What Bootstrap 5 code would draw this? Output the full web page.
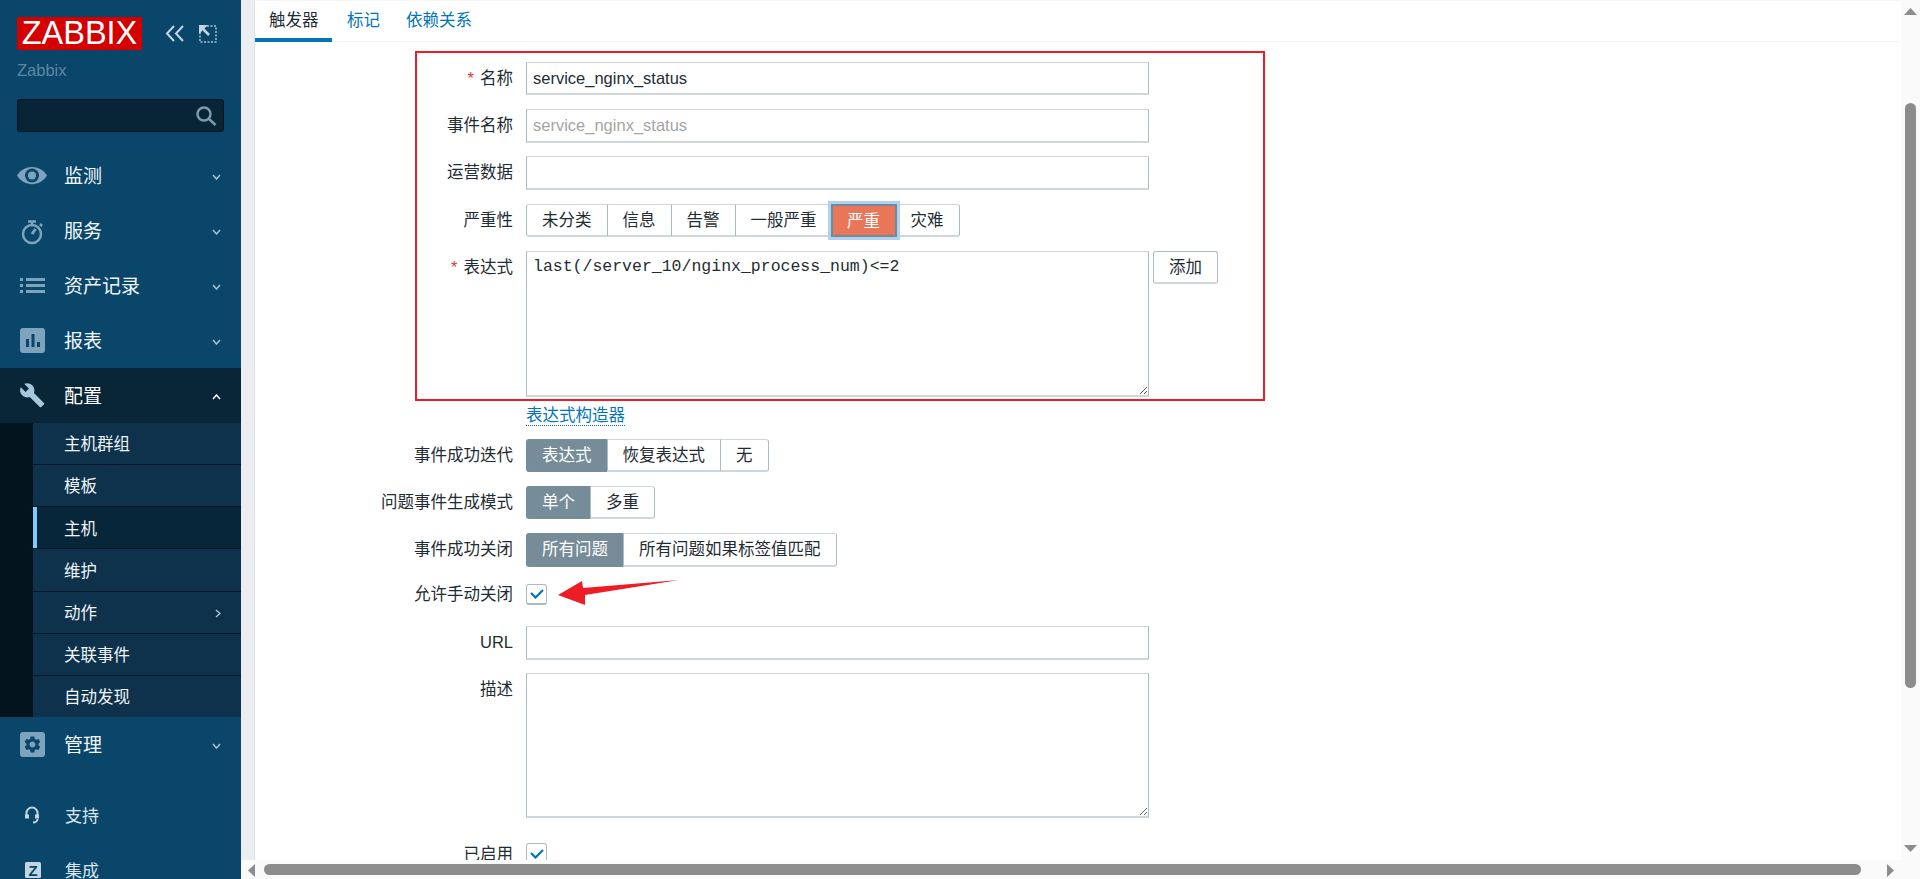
<!DOCTYPE html>
<html lang="zh">
<head>
<meta charset="utf-8">
<title>Zabbix</title>
<link href="https://cdn.jsdelivr.net/npm/bootstrap@5.3.0/dist/css/bootstrap.min.css" rel="stylesheet">
<style>
html,body{height:100%;overflow:hidden}
body{font-family:"Liberation Sans","Noto Sans CJK SC",sans-serif;font-size:16.5px;color:#1f2c33;background:#fff}
.app-shell{height:879px}
.side{width:241px;background:#0a466a;color:#fff;overflow:hidden;flex:none}
.logo-row{padding:17px 0 0 17px;height:50px}
.logo-box{width:125px;height:33px;background:#d40000;color:#fff;font-size:32.5px;line-height:33px;text-align:center;letter-spacing:0}
.logo-tools{margin-left:23px;gap:15px;padding-top:8px}
.side-name{color:#5f87a0;padding:10px 0 0 17px;height:49px;line-height:20px;font-size:16.5px}
.side-search{margin:0 17px;height:33px;width:207px;background:#082437;border:1px solid #04141f;border-radius:3px;padding-right:6px;justify-content:flex-end}
.menu-top{margin-top:16px}
.m-item{height:55px;padding:3px 20px 0 64px;font-size:19px;color:#f2f7fa;position:relative}
.m-item.on{background:#082638;color:#fff}
.m-ico{position:absolute;left:17px;top:0;width:30px;height:55px}
.m-chev{margin-left:auto}
.sub-wrap{background:#03141e;padding-left:33px}
.s-item{height:42.17px;background:#0e324c;border-bottom:1px solid #03172a;padding:2px 20px 0 31px;font-size:16.5px;color:#eef4f7;position:relative}
.s-item:last-child{border-bottom:0;height:41px}
.s-item.on{background:#08263a;box-shadow:inset 4px 0 0 #7fc9ff}
.foot-item{height:55px;padding:2px 0 0 65px;font-size:17px;color:#d9e6ee;position:relative}
.foot-list{margin-top:16px}
.main-col{min-width:0}
.view{min-height:0}
.gutter-strip{width:14px;background:#ebeef0;border-right:1px solid #dfe4e7;flex:none}
.canvas{position:relative;overflow:hidden;min-width:0;background:#fff}
.tabs-bar{height:42px;border-bottom:1px solid #f3f3f3;border-top:1px solid #f5f5f5}
.tab-lnk{height:41px;padding:0 13px;color:#0275b8;font-size:16.5px;border-bottom:4px solid transparent;line-height:38px;text-decoration:none;white-space:nowrap}
.tab-lnk.on{color:#1f2c33;border-bottom-color:#0275b8;padding:0 14px;width:77px;margin-right:2px}
.form-area{padding-top:20px}
.f-row{display:flex;margin-bottom:13.8px}
.f-lab{width:258px;margin-right:13px;text-align:right;height:33.4px;line-height:33px;flex:none}
.req{color:#e33734;margin-right:6px}
.fld{width:623px;height:33.4px;border:1px solid #acbbc2;border-top-color:#cfd7dc;border-bottom:2px solid #cfd7dc;border-radius:0;padding:0 6px;font-size:16.5px;color:#1f2c33;box-shadow:none}
.fld::placeholder{color:#a5a5a5;opacity:1}
.fld-area{height:146px;resize:both;font-family:"Liberation Mono",monospace;font-size:16.5px;line-height:20px;padding:5px 6px}
.fld-desc{height:145px;resize:both;font-size:16.5px}
.seg-btn{font-size:16.5px;line-height:31px;height:33.4px;padding:0 15px;border:1px solid #acbbc2;border-bottom:2px solid #cfd7dc;border-top-color:#cfd7dc;border-radius:3px;background:#fff;color:#1f2c33;flex:none!important}
.seg-btn.act,.seg-btn.act:hover{background:#768d99;color:#fff;border-color:#768d99}
.seg-btn.sev{background:#e97659;color:#fff;border:2px solid #6f8b9a;outline:3px solid #aed3f2;outline-offset:0;z-index:2;width:66px;padding:0;margin-left:-2px!important;margin-right:-1px}
.add-btn{margin-left:4px;width:65px;height:33.4px;padding:0;font-size:16.5px;line-height:30px;border:1px solid #acbbc2;border-bottom:2px solid #cfd7dc;border-radius:3px;color:#1f2c33;background:#fff}
.expr-link{color:#0275b8;text-decoration:none;border-bottom:1px dotted #0275b8;line-height:20px;height:21px;display:inline-block}
.link-row{margin:-7.5px 0 0 271px;height:35.7px}
.chk-box{width:21px;height:21px;border:1px solid #acbbc2;border-bottom-width:2px;border-radius:3px;margin-top:6px;background:#fff;flex:none}
.row-chk{margin-top:-2.4px;margin-bottom:15px}
.enabled-row{margin-top:18.7px}
.enabled-row .f-lab{line-height:35px}
.red-note{position:absolute;left:160px;top:51px;width:850px;height:350px;border:2px solid #ee1c25;pointer-events:none}
.arrow-note{position:absolute;left:303px;top:576px}
.v-track{width:19px;background:#fafafa;flex:none;padding-top:8px}
.v-thumb{width:11px;height:585px;background:#8c8c8c;border-radius:6px;margin:88px 0 157px 4px}
.h-track{height:19px;background:#fafafa;padding:4px 26px 0 7px}
.h-thumb{width:1597px;height:11px;background:#8c8c8c;border-radius:6px;margin:0 26px 0 9px}
</style>
</head>
<body>
<div class="d-flex app-shell">
  <aside class="side">
    <div class="logo-row d-flex">
      <div class="logo-box">ZABBIX</div>
      <div class="logo-tools d-flex align-items-start">
        <svg width="19" height="17" viewBox="0 0 19 17" fill="none" stroke="#c4d6e2" stroke-width="2"><path d="M9 1 2 8.500 9 16M18 1 11 8.500 18 16"/></svg>
        <svg width="18" height="18" viewBox="0 0 18 18" fill="none"><rect x="1" y="1" width="16" height="16" stroke="#a9c2d2" stroke-width="1.500" stroke-dasharray="2 1.500"/><path d="M0 0h9L0 9Z" fill="#c4d6e2"/><path d="m3 3 7 7" stroke="#c4d6e2" stroke-width="2.500"/></svg>
      </div>
    </div>
    <div class="side-name">Zabbix</div>
    <div class="side-search d-flex align-items-center">
      <svg width="22" height="22" viewBox="0 0 22 22" fill="none" stroke="#7d99aa" stroke-width="2.500"><circle cx="9" cy="9" r="6.500"/><path d="m14 14 6.500 6"/></svg>
    </div>
    <nav class="menu-top">
      <div class="m-item d-flex align-items-center">
        <svg class="m-ico" viewBox="0 0 30 55"><path d="M0 27.500C7 16 23 16 30 27.500 23 39 7 39 0 27.500Z" fill="#7ea3bd"/><circle cx="15" cy="27.500" r="7" fill="#0a466a"/><circle cx="15" cy="27.500" r="4" fill="#7ea3bd"/></svg>
        监测<svg class="m-chev" width="9" height="6" viewBox="0 0 9 6" fill="none" stroke="#a9c2d2" stroke-width="1.500"><path d="m1 1 3.500 4L8 1"/></svg>
      </div>
      <div class="m-item d-flex align-items-center">
        <svg class="m-ico" viewBox="0 0 30 55" fill="none" stroke="#7ea3bd" stroke-width="2.500"><circle cx="15" cy="31" r="9"/><path d="M11 18.500h8M15 18.500V22M23 21l2 2"/><path d="m15 31 3.500-5" stroke-width="3"/></svg>
        服务<svg class="m-chev" width="9" height="6" viewBox="0 0 9 6" fill="none" stroke="#a9c2d2" stroke-width="1.500"><path d="m1 1 3.500 4L8 1"/></svg>
      </div>
      <div class="m-item d-flex align-items-center">
        <svg class="m-ico" viewBox="0 0 30 55" fill="#7ea3bd"><path d="M3 20h3v3H3zM9 20h19v3H9zM3 26h3v3H3zM9 26h19v3H9zM3 32h3v3H3zM9 32h19v3H9z"/></svg>
        资产记录<svg class="m-chev" width="9" height="6" viewBox="0 0 9 6" fill="none" stroke="#a9c2d2" stroke-width="1.500"><path d="m1 1 3.500 4L8 1"/></svg>
      </div>
      <div class="m-item d-flex align-items-center">
        <svg class="m-ico" viewBox="0 0 30 55"><rect x="3" y="15" width="25" height="25" rx="3" fill="#7ea3bd"/><path d="M9 26h3v8H9zM14.500 21h3v13h-3zM20 29h3v5h-3z" fill="#0a466a"/></svg>
        报表<svg class="m-chev" width="9" height="6" viewBox="0 0 9 6" fill="none" stroke="#a9c2d2" stroke-width="1.500"><path d="m1 1 3.500 4L8 1"/></svg>
      </div>
      <div class="m-item on d-flex align-items-center">
        <svg class="m-ico" viewBox="0 0 30 55"><g transform="translate(2 14) scale(1.100)"><path fill="#a5c8dc" d="M22.700 19l-9.100-9.100c.9-2.300.4-5-1.500-6.900-2-2-5-2.400-7.400-1.300L9 6 6 9 1.600 4.700C.4 7.100.9 10.100 2.900 12.100c1.900 1.900 4.600 2.400 6.900 1.500l9.100 9.100c.4.4 1 .4 1.400 0l2.300-2.300c.5-.4.5-1.100.1-1.400z"/></g></svg>
        配置<svg class="m-chev" width="9" height="6" viewBox="0 0 9 6" fill="none" stroke="#fff" stroke-width="1.500"><path d="m1 5 3.500-4L8 5"/></svg>
      </div>
      <div class="sub-wrap">
        <div class="s-item d-flex align-items-center">主机群组</div>
        <div class="s-item d-flex align-items-center">模板</div>
        <div class="s-item on d-flex align-items-center">主机</div>
        <div class="s-item d-flex align-items-center">维护</div>
        <div class="s-item d-flex align-items-center">动作<svg class="m-chev" width="6" height="9" viewBox="0 0 6 9" fill="none" stroke="#a9c2d2" stroke-width="1.500"><path d="m1 1 4 3.500L1 8"/></svg></div>
        <div class="s-item d-flex align-items-center">关联事件</div>
        <div class="s-item d-flex align-items-center">自动发现</div>
      </div>
      <div class="m-item d-flex align-items-center">
        <svg class="m-ico" viewBox="0 0 30 55"><rect x="3" y="15" width="25" height="25" rx="3" fill="#7ea3bd"/><g transform="translate(5.500 17.500) scale(.83)"><path fill="#0a466a" d="M19.140 12.940c.04-.3.06-.61.06-.94 0-.32-.02-.64-.07-.94l2.030-1.580c.18-.14.23-.41.120-.61l-1.920-3.320c-.12-.22-.37-.29-.59-.22l-2.390.96c-.5-.38-1.030-.7-1.620-.94l-.36-2.540c-.04-.24-.24-.41-.48-.41h-3.840c-.24 0-.43.17-.47.41l-.36 2.540c-.59.24-1.130.57-1.620.94l-2.390-.96c-.22-.08-.47 0-.59.22L2.740 8.870c-.12.21-.08.47.12.61l2.030 1.580c-.05.3-.09.63-.09.94s.02.64.07.94l-2.030 1.580c-.18.14-.23.41-.12.61l1.920 3.320c.12.22.37.29.59.22l2.390-.96c.5.38 1.030.7 1.620.94l.36 2.540c.05.24.24.41.48.41h3.840c.24 0 .44-.17.47-.41l.36-2.540c.59-.24 1.130-.56 1.620-.94l2.390.96c.22.08.47 0 .59-.22l1.920-3.320c.12-.22.07-.47-.12-.61l-2.010-1.580zM12 15.600c-1.980 0-3.600-1.620-3.600-3.600s1.620-3.600 3.600-3.600 3.600 1.620 3.600 3.600-1.620 3.600-3.600 3.600z"/></g></svg>
        管理<svg class="m-chev" width="9" height="6" viewBox="0 0 9 6" fill="none" stroke="#a9c2d2" stroke-width="1.500"><path d="m1 1 3.500 4L8 1"/></svg>
      </div>
      <div class="foot-list">
        <div class="foot-item d-flex align-items-center">
          <svg class="m-ico" viewBox="0 0 30 55" fill="none" stroke="#c4d6e2" stroke-width="2"><path d="M9.500 28v-3a5.500 5.500 0 0 1 11 0v3"/><path d="M10 26.500v4M20 26.500v4" stroke-width="4"/><path d="M20.500 31c0 2-2 3.500-4.500 3.500"/></svg>
          支持
        </div>
        <div class="foot-item d-flex align-items-center">
          <svg class="m-ico" viewBox="0 0 30 55"><rect x="8" y="19" width="16" height="16" rx="1.500" fill="#c4d6e2"/><text x="16" y="32.500" text-anchor="middle" font-family="Liberation Sans" font-weight="700" font-size="15" fill="#0a466a">Z</text></svg>
          集成
        </div>
      </div>
    </nav>
  </aside>
  <div class="main-col flex-grow-1 d-flex flex-column">
    <div class="view flex-grow-1 d-flex">
      <div class="gutter-strip"></div>
      <main class="canvas flex-grow-1">
        <div class="tabs-bar d-flex">
          <a class="tab-lnk on" href="#">触发器</a>
          <a class="tab-lnk" href="#">标记</a>
          <a class="tab-lnk" href="#">依赖关系</a>
        </div>
        <form class="form-area">
          <div class="f-row"><div class="f-lab"><span class="req">*</span>名称</div><input class="form-control fld" value="service_nginx_status"></div>
          <div class="f-row"><div class="f-lab">事件名称</div><input class="form-control fld" placeholder="service_nginx_status"></div>
          <div class="f-row"><div class="f-lab">运营数据</div><input class="form-control fld"></div>
          <div class="f-row"><div class="f-lab">严重性</div>
            <div class="btn-group">
              <button type="button" class="btn seg-btn">未分类</button>
              <button type="button" class="btn seg-btn">信息</button>
              <button type="button" class="btn seg-btn">告警</button>
              <button type="button" class="btn seg-btn">一般严重</button>
              <button type="button" class="btn seg-btn sev">严重</button>
              <button type="button" class="btn seg-btn">灾难</button>
            </div>
          </div>
          <div class="f-row"><div class="f-lab"><span class="req">*</span>表达式</div><textarea class="form-control fld fld-area">last(/server_10/nginx_process_num)&lt;=2</textarea><button type="button" class="btn add-btn">添加</button></div>
          <div class="link-row"><a class="expr-link" href="#">表达式构造器</a></div>
          <div class="f-row"><div class="f-lab">事件成功迭代</div>
            <div class="btn-group">
              <button type="button" class="btn seg-btn act">表达式</button>
              <button type="button" class="btn seg-btn">恢复表达式</button>
              <button type="button" class="btn seg-btn">无</button>
            </div>
          </div>
          <div class="f-row"><div class="f-lab">问题事件生成模式</div>
            <div class="btn-group">
              <button type="button" class="btn seg-btn act">单个</button>
              <button type="button" class="btn seg-btn">多重</button>
            </div>
          </div>
          <div class="f-row"><div class="f-lab">事件成功关闭</div>
            <div class="btn-group">
              <button type="button" class="btn seg-btn act">所有问题</button>
              <button type="button" class="btn seg-btn">所有问题如果标签值匹配</button>
            </div>
          </div>
          <div class="f-row row-chk"><div class="f-lab">允许手动关闭</div><div class="chk-box d-flex align-items-center justify-content-center"><svg width="14" height="11" viewBox="0 0 14 11" fill="none" stroke="#0275b8" stroke-width="2.200"><path d="m1 5 4.500 4.500L13 2"/></svg></div></div>
          <div class="f-row"><div class="f-lab">URL</div><input class="form-control fld"></div>
          <div class="f-row"><div class="f-lab">描述</div><textarea class="form-control fld fld-desc"></textarea></div>
          <div class="f-row enabled-row"><div class="f-lab">已启用</div><div class="chk-box d-flex align-items-center justify-content-center"><svg width="14" height="11" viewBox="0 0 14 11" fill="none" stroke="#0275b8" stroke-width="2.200"><path d="m1 5 4.500 4.500L13 2"/></svg></div></div>
        </form>
        <div class="red-note"></div>
        <svg class="arrow-note" width="125" height="32" viewBox="0 0 125 32"><path d="M0 19 24 5 25 12 121 4 27 19 27 29Z" fill="#ee1c25"/></svg>
      </main>
      <div class="v-track">
        <svg class="d-block mx-auto" width="13" height="7" viewBox="0 0 13 7" fill="#8c8c8c"><path d="M6.500 0 13 7H0Z"/></svg>
        <div class="v-thumb"></div>
        <svg class="d-block mx-auto" width="13" height="7" viewBox="0 0 13 7" fill="#8c8c8c"><path d="M0 0h13L6.500 7Z"/></svg>
      </div>
    </div>
    <div class="h-track d-flex align-items-start">
      <svg width="7" height="13" viewBox="0 0 7 13" fill="#8c8c8c"><path d="M7 0v13L0 6.500Z"/></svg>
      <div class="h-thumb flex-shrink-0"></div>
      <svg width="7" height="13" viewBox="0 0 7 13" fill="#8c8c8c"><path d="M0 0l7 6.500L0 13Z"/></svg>
    </div>
  </div>
</div>
</body>
</html>
